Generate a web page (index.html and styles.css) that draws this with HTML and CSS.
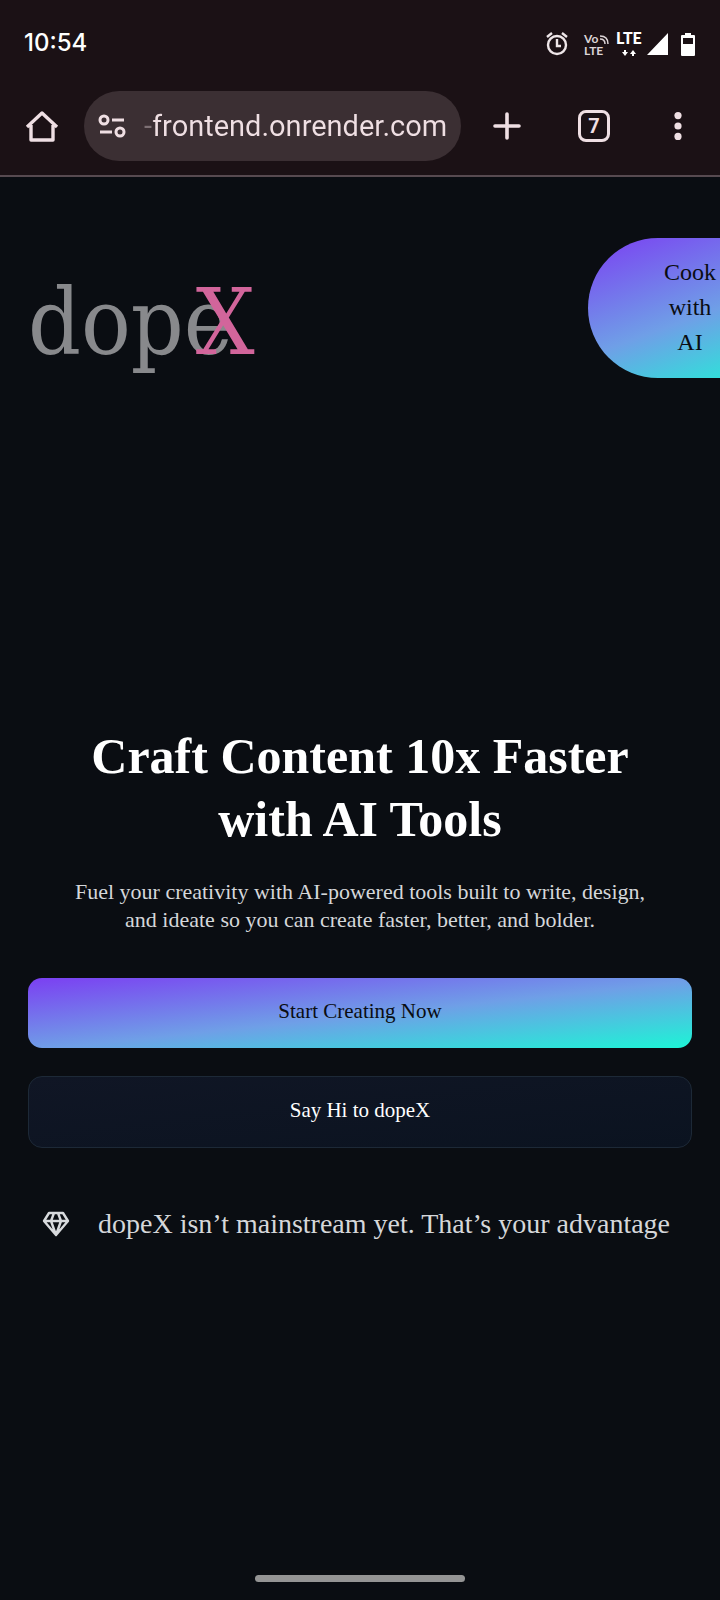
FILE: index.html
```html
<!DOCTYPE html>
<html lang="en">
<head>
<meta charset="utf-8">
<meta name="viewport" content="width=device-width, initial-scale=1">
<title>dopeX</title>
<link rel="stylesheet" href="styles.css">
</head>
<body>
<header class="chrome">
  <div class="status">
    <time class="clock">10:54</time>
    <svg class="status-icons" width="152" height="28" viewBox="0 0 152 28" role="img" aria-label="Alarm, VoLTE, LTE signal, battery">
      <g fill="none" stroke="#eee6e8" stroke-width="2.4">
        <circle cx="13" cy="16" r="9"/>
        <path d="M13 10v7h4M3 8l5-4M23 8l-5-4"/>
      </g>
      <g fill="#ddd5d7" font-family="Lato" font-weight="700">
        <text x="40" y="14" font-size="12">Vo</text>
        <text x="40" y="26" font-size="12">LTE</text>
      </g>
      <g fill="none" stroke="#ddd5d7" stroke-width="1.5">
        <path d="M56 10q5 0 5 5M56 7q8 0 8 8"/>
      </g>
      <text x="72" y="15" font-family="Lato" font-weight="900" font-size="16" fill="#fff">LTE</text>
      <path fill="#fff" d="M103 26h21V4zM80 21h2v2h2l-3 4-3-4h2zM88 27h2v-2h2l-3-4-3 4h2z"/>
      <path fill="#fff" fill-rule="evenodd" d="M141 4h6v2h3q1 0 1 1v19q0 1-1 1h-12q-1 0-1-1V7q0-1 1-1h3zM139 9v6h10V9z"/>
    </svg>
  </div>
  <nav class="toolbar" aria-label="Browser">
    <button class="tool" aria-label="Home">
      <svg width="34" height="34" viewBox="0 0 34 34" fill="none" stroke="#efdfe3" stroke-width="3.4" stroke-linejoin="round"><path d="M2 18 17 4l15 14M6 16v15h22V16"/></svg>
    </button>
    <div class="address">
      <svg width="28" height="24" viewBox="0 0 28 24" fill="none" stroke="#efdfe3" stroke-width="3"><circle cx="6" cy="6" r="4"/><path d="M14 6h12M2 18h12"/><circle cx="22" cy="18" r="4"/></svg>
      <input class="url" aria-label="Address" value="-frontend.onrender.com" readonly>
    </div>
    <button class="tool new-tab" aria-label="New tab">
      <svg width="28" height="28" viewBox="0 0 28 28" stroke="#efdfe3" stroke-width="3.6" stroke-linecap="round"><path d="M14 2v24M2 14h24"/></svg>
    </button>
    <button class="tool" aria-label="Tabs"><span class="tabs">7</span></button>
    <button class="tool" aria-label="More">
      <svg width="8" height="28" viewBox="0 0 8 28" fill="#efdfe3"><circle cx="4" cy="3.6" r="3.6"/><circle cx="4" cy="14" r="3.6"/><circle cx="4" cy="24.4" r="3.6"/></svg>
    </button>
  </nav>
</header>
<div class="site">
  <div class="masthead">
    <a class="logo" href="#">dope<span class="logo-x">X</span></a>
    <button class="cook">Cook with AI</button>
  </div>
  <main class="hero">
    <h1>Craft Content 10x Faster<br>with AI Tools</h1>
    <p class="lead">Fuel your creativity with AI-powered tools built to write, design,<br>and ideate so you can create faster, better, and bolder.</p>
    <button class="cta primary">Start Creating Now</button>
    <button class="cta secondary">Say Hi to dopeX</button>
    <p class="note">
      <svg width="28" height="26" viewBox="0 0 28 26" fill="none" stroke="#d8dadd" stroke-width="2.4" stroke-linejoin="round" aria-hidden="true"><path d="M7 2h14l5 8-12 14L2 10zM2 10h24M12 2l-3 8 5 14 5-14-3-8"/></svg>
      <span>dopeX isn’t mainstream yet. That’s your advantage</span>
    </p>
  </main>
  <div class="home-bar"></div>
</div>
</body>
</html>
```
FILE: styles.css
```css
* { box-sizing: border-box; }
body {
  margin: 0;
  min-height: 100vh;
  display: flex;
  flex-direction: column;
  background: #0a0d12;
  color: #fff;
  font-family: "Liberation Serif", serif;
}
button { border: 0; padding: 0; background: none; color: inherit; font: inherit; }
p, h1 { margin: 0; }

.chrome { background: #1b1115; border-bottom: 2px solid #574a50; }
.status {
  display: flex;
  justify-content: space-between;
  align-items: center;
  height: 86px;
  padding: 0 24px;
}
.clock { font: 500 24px/32px Inter, sans-serif; }
.toolbar {
  display: flex;
  align-items: center;
  height: 89px;
  padding-bottom: 9px;
}
.tool { display: flex; justify-content: center; align-items: center; width: 84px; height: 70px; }
.new-tab { width: 91px; }
.tool svg { display: block; }
.address {
  flex: 1;
  display: flex;
  align-items: center;
  gap: 18px;
  min-width: 0;
  height: 70px;
  padding: 0 10px 0 14px;
  border-radius: 35px;
  background: #3b2f33;
}
.address svg { flex: none; }
.url {
  flex: 1;
  min-width: 0;
  padding: 0;
  border: 0;
  outline: 0;
  background: linear-gradient(90deg, #7d7074 8px, #efdfe3 10px);
  background-clip: text;
  color: transparent;
  font: 29px/40px Roboto, sans-serif;
}
.tabs {
  width: 32px;
  height: 32px;
  border: 3px solid #efdfe3;
  border-radius: 8px;
  color: #efdfe3;
  font: 700 20px/26px Roboto, sans-serif;
  text-align: center;
}

.site {
  flex: 1;
  display: flex;
  flex-direction: column;
  padding: 61px 0 18px;
  overflow: hidden;
}
.masthead { display: flex; justify-content: space-between; padding-left: 28px; }
.logo {
  position: relative;
  padding-top: 30px;
  color: #88898c;
  font: 92px/110px "DejaVu Serif Condensed", "DejaVu Serif", serif;
  text-decoration: none;
}
.logo-x { position: absolute; right: -22px; color: #d2659b; }
.cook {
  flex: none;
  width: 204px;
  height: 140px;
  margin-right: -72px;
  padding: 0 70px 2px;
  border-radius: 70px;
  background: linear-gradient(160deg, #7b3ff2, #6f9fe7 55%, #1cf5d6);
  color: #0a0d12;
  font-size: 24px;
  line-height: 35px;
}
.hero {
  display: flex;
  flex-direction: column;
  padding: 347px 28px 0;
  text-align: center;
}
h1 { font-size: 50px; line-height: 63px; font-weight: 700; }
.lead { margin-top: 27px; color: #d5d7da; font-size: 22px; line-height: 28px; }
.cta { height: 70px; padding-bottom: 3px; border-radius: 14px; font-size: 21px; }
.primary {
  margin-top: 44px;
  background: linear-gradient(to bottom right, #7b3ff2, #6f9fe7 52%, #1cf5d6);
  color: #0a0d12;
}
.secondary {
  height: 72px;
  margin-top: 28px;
  border: 1px solid #1d2937;
  background: linear-gradient(to bottom right, #101625, #0b1320);
}
.note {
  display: flex;
  align-items: center;
  gap: 28px;
  margin-top: 58px;
  padding-left: 14px;
  color: #d5d7da;
  font-size: 28px;
  line-height: 36px;
  white-space: nowrap;
}
.home-bar {
  width: 210px;
  height: 7px;
  margin: auto auto 0;
  border-radius: 4px;
  background: #949494;
}
```
